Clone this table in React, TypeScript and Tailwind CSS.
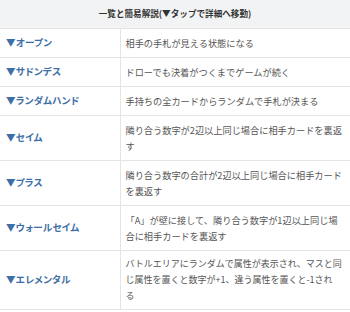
import type { ReactNode } from "react";

const rows: { label: string; text: ReactNode; small?: boolean }[] = [
  { label: "▼オープン", text: "相手の手札が見える状態になる" },
  { label: "▼サドンデス", text: "ドローでも決着がつくまでゲームが続く" },
  { label: "▼ランダムハンド", text: "手持ちの全カードからランダムで手札が決まる" },
  { label: "▼セイム", text: "隣り合う数字が2辺以上同じ場合に相手カードを裏返す" },
  { label: "▼プラス", text: "隣り合う数字の合計が2辺以上同じ場合に相手カードを裏返す" },
  { label: "▼ウォールセイム", text: "「A」が壁に接して、隣り合う数字が1辺以上同じ場合に相手カードを裏返す" },
  {
    label: "▼エレメンタル",
    text: (
      <>
        バトルエリアにランダムで属性が表示され、マスと同じ属性を置くと数字が+1、違う属性を置くと-1され
        <br />る
      </>
    ),
    small: true,
  },
];

export default function App() {
  return (
    <div className="w-[350px] h-[312px] overflow-hidden bg-white font-['Noto_Sans_CJK_JP',sans-serif]">
      <table className="w-full border-collapse table-fixed">
        <colgroup>
          <col className="w-[120px]" />
          <col />
        </colgroup>
        <thead>
          <tr>
            <th
              colSpan={2}
              className="h-[28px] bg-[#f2f3f5] border-b border-[#e4e4e4] text-[8.6px] font-bold text-[#333] text-center"
            >
              一覧と簡易解説(▼タップで詳細へ移動)
            </th>
          </tr>
        </thead>
        <tbody>
          {rows.map((r) => (
            <tr key={r.label} className="border-b border-[#e4e4e4]">
              <td className="border-r border-[#e4e4e4] pl-[6px] text-[9.5px] font-bold text-[#3d6ea6] tracking-[0.3px] [font-feature-settings:'palt']">
                {r.label}
              </td>
              <td
                className={
                  r.small
                    ? "px-[5px] py-[5px] text-[9px] leading-[16px] text-[#555]"
                    : "px-[5px] py-[6px] text-[9.2px] leading-[16px] text-[#555]"
                }
              >
                {r.text}
              </td>
            </tr>
          ))}
        </tbody>
      </table>
    </div>
  );
}
